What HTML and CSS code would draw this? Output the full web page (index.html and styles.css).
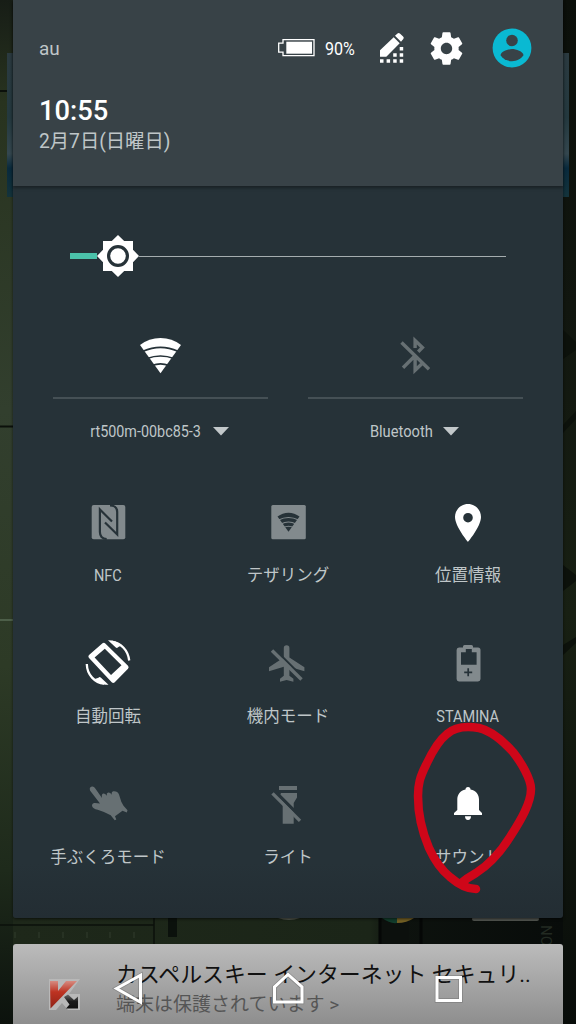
FILE: index.html
```html
<!DOCTYPE html>
<html lang="ja">
<head>
<meta charset="utf-8">
<title>クイック設定</title>
<link rel="stylesheet" href="styles.css">
</head>
<body>
<div class="screen">
  <svg class="wallpaper" width="576" height="1024" viewBox="0 0 576 1024">
    <defs>
      <linearGradient id="wl" x1="0" y1="0" x2="0" y2="1"><stop offset="0" stop-color="#171d16"/><stop offset=".1" stop-color="#28331f"/><stop offset=".4" stop-color="#323f2e"/><stop offset=".65" stop-color="#2d3a26"/><stop offset=".85" stop-color="#1e2a1b"/><stop offset="1" stop-color="#0c120d"/></linearGradient>
      <linearGradient id="wr" x1="0" y1="0" x2="0" y2="1"><stop offset="0" stop-color="#0b0f0a"/><stop offset=".3" stop-color="#11160f"/><stop offset=".6" stop-color="#182013"/><stop offset="1" stop-color="#080c09"/></linearGradient>
      <linearGradient id="card" x1="0" y1="0" x2="0" y2="1"><stop offset="0" stop-color="#2b3a40"/><stop offset=".45" stop-color="#24393f"/><stop offset=".7" stop-color="#34474f"/><stop offset=".8" stop-color="#092a3d"/><stop offset="1" stop-color="#14333b"/></linearGradient>
      <linearGradient id="strip" x1="0" y1="0" x2="1" y2="0"><stop offset="0" stop-color="#1e281a"/><stop offset=".65" stop-color="#1b2518"/><stop offset=".7" stop-color="#0d120e"/><stop offset="1" stop-color="#080c0a"/></linearGradient>
    </defs>
    <rect width="288" height="1024" fill="url(#wl)"/>
    <rect x="288" width="288" height="1024" fill="url(#wr)"/>
    <rect x="7" y="53" width="562" height="144" fill="url(#card)"/>
    <path d="M0 91h7M0 426.500h13" stroke="#0b100b" stroke-width="2"/>
    <path d="M0 620h13" stroke="#4d5f49" stroke-width="2"/>
    <path d="M563 330l13 12v8l-13 9zM563 425l13-14v8l-13 14zM563 565l13 10v6l-13 10zM563 645l13-8v6l-13 12z" fill="#0c110b"/>
    <rect x="13" y="915" width="550" height="32" fill="url(#strip)"/>
    <path d="M0 925h154M154 918v28" stroke="#0b100b" stroke-width="1.500"/>
    <path d="M15 932v6M39 932v6M63 932v6M87 932v6M110 932v6M134 932v6" stroke="#2b3627" stroke-width="1.500"/>
    <rect x="168" y="918" width="9" height="19" fill="#0b110c"/>
    <path d="M278 918q11 4 22 0z" fill="#53584e"/>
    <path d="M380 918h29v26h-29z" fill="#0c100d"/>
    <path d="M380 918v26M421 918v26" stroke="#050706" stroke-width="3"/>
    <path d="M382 918q8 6 15 5v-5z" fill="#123d2c"/>
    <path d="M397 918v5q10 0 17-5z" fill="#746024"/>
    <rect x="472" y="917" width="67" height="4" rx="2" fill="#51544f"/>
    <text class="side-text" transform="translate(541 925) rotate(90)">NO</text>
  </svg>

  <main class="panel">
    <header class="header">
      <div class="status">
        <span class="carrier">au</span>
        <div class="status-icons">
          <svg class="battery" viewBox="0 0 38 18"><path d="M6 .7h31v16H6v-3.500H1.700v-9H6z" fill="none" stroke="#fff" stroke-width="1.300"/><rect x="9.300" y="2.700" width="25.700" height="12" fill="#fff"/></svg>
          <span class="percent"><span class="squeeze">90%</span></span>
          <svg class="edit" viewBox="0 0 48 48" fill="#fff"><path d="M12 26.300v6.400h6.300L31.700 19.200l-6-6zM27 11.700l2.500-2.300q1.200-.8 2.400.2l3.200 3q1.300 1.200.2 2.500L33 17.700zM12 35.200h3.500v3.500H12zM18.600 35.200h3.500v3.500h-3.500zM25.200 35.200h3.500v3.500h-3.500zM31.700 35.200h3.500v3.500h-3.500zM25.200 29.200h3.500v3.500h-3.500zM31.700 29.200h3.500v3.500h-3.500zM31.700 23h3.500v3.500h-3.500z"/></svg>
          <svg class="gear" viewBox="0 0 24 24" fill="#fff"><path d="M19.430 12.980c.04-.32.07-.64.07-.98s-.03-.66-.07-.98l2.110-1.650c.19-.15.24-.42.12-.64l-2-3.460c-.12-.22-.39-.3-.61-.22l-2.490 1c-.52-.4-1.080-.73-1.690-.98l-.38-2.650C14.460 2.180 14.250 2 14 2h-4c-.25 0-.46.18-.49.42l-.38 2.650c-.61.25-1.170.59-1.690.98l-2.490-1c-.23-.09-.49 0-.61.22l-2 3.460c-.13.22-.07.49.12.64l2.110 1.650c-.04.32-.07.65-.07.98s.03.66.07.98l-2.110 1.650c-.19.15-.24.42-.12.64l2 3.460c.12.22.39.3.61.22l2.490-1c.52.4 1.080.73 1.690.98l.38 2.650c.03.24.24.42.49.42h4c.25 0 .46-.18.49-.42l.38-2.650c.61-.25 1.170-.59 1.690-.98l2.490 1c.23.09.49 0 .61-.22l2-3.460c.12-.22.07-.49-.12-.64l-2.110-1.650zM12 15.500c-1.930 0-3.500-1.570-3.500-3.500s1.570-3.500 3.500-3.500 3.500 1.570 3.500 3.500-1.570 3.500-3.500 3.500z"/></svg>
          <svg class="avatar" viewBox="0 0 48 48"><circle cx="24" cy="24" r="19.400" fill="#0ab9d2"/><circle cx="24" cy="16.500" r="5.800" fill="#384247"/><path d="M12.500 31.300c.3-3.800 7.500-6.200 11.500-6.200s11.200 2.400 11.500 6.200C33 35 28.800 37.200 24 37.200S15 35 12.500 31.300z" fill="#384247"/></svg>
        </div>
      </div>
      <div class="clock">10:55</div>
      <div class="date">2月7日(日曜日)</div>
    </header>

    <div class="brightness">
      <span class="level"></span>
      <svg class="knob" viewBox="0 0 42 42"><path d="M21 0l6.200 6H36v8.800L42 21l-6 6.200V36h-8.800L21 42l-6.200-6H6v-8.800L0 21l6-6.200V6h8.800z" fill="#fff"/><circle cx="21" cy="21" r="9.400" fill="none" stroke="#263238" stroke-width="3.200"/></svg>
      <span class="track"></span>
    </div>

    <section class="wide-tiles">
      <div class="wide-tile">
        <div class="wide-icon"><svg class="icon" viewBox="0 0 48 48"><path d="M24.500 42.200L4 14Q13 7 24.500 7T45 14z" fill="#fff"/><g fill="none" stroke="#263238" stroke-width="1.700"><path d="M7 20.300q17.500-7.800 35 0M11 27.500q13.500-5 27 0M16 34.500q8.500-3.400 17 0"/></g></svg></div>
        <div class="wide-label"><span class="ssid">rt500m-00bc85-3</span><svg class="caret" viewBox="0 0 16 9"><path d="M0 0h16L8 8.500z"/></svg></div>
      </div>
      <div class="wide-tile">
        <div class="wide-icon"><svg class="icon off" viewBox="0 0 48 48" fill="none" stroke="currentColor" stroke-width="3.400"><path d="M10.500 11.500L38 38.300M12 36.700l12-12M24.100 24v15.200l6.800-6.500M24.100 17V9.500l7.300 7-4.200 4.200"/></svg></div>
        <div class="wide-label"><span class="bt">Bluetooth</span><svg class="caret" viewBox="0 0 16 9"><path d="M0 0h16L8 8.500z"/></svg></div>
      </div>
    </section>

    <section class="tiles">
      <div class="tile"><div class="tile-icon"><svg class="icon mid" viewBox="0 0 48 48"><rect x="7.700" y="7" width="33.600" height="34.300" rx="2" fill="currentColor"/><path d="M22.700 41c-4.700 0-6.800-3-6.800-7V11.500L28 23.500M26 7.500c5 0 7.200 2.500 7.200 6.500v22.500L21 24.500" fill="none" stroke="#263238" stroke-width="2.200"/></svg></div><div class="label"><span class="nfc">NFC</span></div></div>
      <div class="tile"><div class="tile-icon"><svg class="icon mid" viewBox="0 0 48 48"><rect x="7.300" y="7" width="34.500" height="34.300" rx="1.500" fill="currentColor"/><path d="M24.500 33.800l-11-15.300q5-3.800 11-3.800t11 3.800z" fill="#263238"/><path d="M14.500 22q10-5 20 0M17 26q7.500-4 15 0M19 29.800q5.500-3 11 0" fill="none" stroke="currentColor" stroke-width="1.100"/></svg></div><div class="label">テザリング</div></div>
      <div class="tile"><div class="tile-icon"><svg class="icon" viewBox="0 0 48 48"><path d="M24 6c-7.300 0-13 5.900-13 13 0 9.500 13 25 13 25s13-15.500 13-25c0-7.100-5.700-13-13-13zm0 8.900a4.800 4.800 0 1 1 0 9.600 4.800 4.800 0 0 1 0-9.600z" fill="#fff"/></svg></div><div class="label">位置情報</div></div>

      <div class="tile"><div class="tile-icon"><svg class="icon" viewBox="0 0 48 48"><path fill="#fff" fill-rule="evenodd" d="M5 16L18.500 4.300q1.500-1 2.800.2L44 26.800q1.300 1.500 0 3L30.500 43.500q-1.500 1-2.800-.3L4.800 18.800q-1-1.500.2-2.800zM10.600 18.500L27 36l10.500-9.800L20.800 9.800z"/><path d="M2.800 25C3 36 11 43.800 20 44.600M45.200 21.500C44 11 37 4 28 3" fill="none" stroke="#fff" stroke-width="2.300"/><path d="M24 1.300c6 0 10 1.700 13.500 5L34 8.300q-1 1.200-2.500 0zM24.500 45.700c-7 0-11-2-14.500-5.500l4.500-1.500q1-1.500 2.500 0z" fill="#fff"/></svg></div><div class="label">自動回転</div></div>
      <div class="tile"><div class="tile-icon"><svg class="icon off" viewBox="0 0 48 48"><path d="M19.800 9q0-2.800 2.800-2.800T25.400 9v9.500l15 9.700v4l-15-4.400v9l4 3v2.900l-6.800-1.800L16 42.700v-2.900l3.800-3v-9L5 32.200v-4l14.800-9.700z" fill="currentColor"/><path d="M10.500 10L40 39.500" stroke="#263238" stroke-width="2.300"/><path d="M8 11.500l29.500 29" stroke="currentColor" stroke-width="3.400"/></svg></div><div class="label">機内モード</div></div>
      <div class="tile"><div class="tile-icon"><svg class="icon mid" viewBox="0 0 48 48"><path fill="currentColor" fill-rule="evenodd" d="M20.500 6h7q1.500 0 1.500 1.500v1h5q2.500 0 2.500 2.500v29q0 2.400-2.500 2.400H15q-2.400 0-2.400-2.400V11q0-2.500 2.400-2.500h4v-1Q19 6 20.500 6zM17 13.300v12.400h15.600V13.300h-4.800V10h-6v3.300z"/><path d="M24.200 29.300v8M20.200 33.300h8" stroke="#263238" stroke-width="1.700"/></svg></div><div class="label"><span class="stamina">STAMINA</span></div></div>

      <div class="tile"><div class="tile-icon low"><svg class="icon off" viewBox="0 0 48 48"><path fill="currentColor" d="M6 11.500Q5 8 8 7.600q2-.3 3.300 2L18 19q-.8-4 1.200-4.600 2-.2 3.600 2.400-.6-2.900 1.300-3.400 2.200-.2 3.600 2.300-.5-3 1.500-3.500 4.200-.5 5.800 3.200l2.300 7.300 2.200 4 4 4.500-.7 2.300-4.300-1.800-7.500 5.500 1.300 3.200-1.600.8-4-4.900q-6-3.500-13-5.600-5-1-5.700-4 .2-3 3-2.700l5 .6z"/></svg></div><div class="label">手ぶくろモード</div></div>
      <div class="tile"><div class="tile-icon low"><svg class="icon off" viewBox="0 0 48 48"><path d="M15 7h18v4H15zM17 14h16v4.500l-3.300 5.500v20.700h-11V24L15 18.500z" fill="currentColor"/><path d="M11 12.500l29 29" stroke="#263238" stroke-width="3.200"/><path d="M8.500 14.300L36 41.800" stroke="currentColor" stroke-width="3.300"/></svg></div><div class="label">ライト</div></div>
      <div class="tile"><div class="tile-icon low"><svg class="icon" viewBox="0 0 48 48"><path d="M21.500 10.500q0-2.500 2.500-2.500t2.500 2.500C32 11.500 35 15.500 35 20.500V31l3 3v2H10v-2l3.300-3V20.500c0-5 3-9 8.200-10zM21 37.300h6q0 3.700-3 3.700t-3-3.700z" fill="#fff"/></svg></div><div class="label">サウンド</div></div>
    </section>
  </main>

  <article class="notification">
    <svg class="app-icon" viewBox="0 0 31 31"><defs><linearGradient id="red" x1="0" y1="0" x2="0" y2="1"><stop offset="0" stop-color="#d68b80"/><stop offset=".4" stop-color="#bd3322"/><stop offset="1" stop-color="#8f2216"/></linearGradient><linearGradient id="blk" x1="0" y1="0" x2="0" y2="1"><stop offset="0" stop-color="#6a6a6a"/><stop offset=".5" stop-color="#1a1a1a"/><stop offset="1" stop-color="#111"/></linearGradient></defs><path d="M0 0h31L20 15h11v16H19l-6-7-6 7H0z" fill="#b8b8b8"/><path d="M1 2h8v10l8-10h11L1.500 29.500z" fill="url(#red)"/><path d="M15 18l4-2.500 6 5.500 4-3.500V29.500H17l3.500-4z" fill="url(#blk)"/></svg>
    <div class="message">
      <div class="title"><span>カスペルスキー インターネット セキュリ..</span></div>
      <div class="detail"><span>端末は保護されています &gt;</span></div>
    </div>
  </article>

  <svg class="overlay" width="576" height="1024" viewBox="0 0 576 1024" fill="none">
    <path d="M116.500 988.500l24-13.300v27zM274.500 1002V987L288 974.500l14 12.500v15zM437 977.500h23.500v23H437z" stroke="#444" stroke-opacity=".3" stroke-width="4.500"/>
    <path d="M116.500 988.500l24-13.300v27zM274.500 1002V987L288 974.500l14 12.500v15zM437 977.500h23.500v23H437z" stroke="#fff" stroke-width="3"/>
    <path d="M476 889C466 889 458 884 450 877 440 869 434 859 429 848 423 834 418 815 418 796 418 784 420 777 426 765 432 752 438 741 447 734 455 727 467 726 479 728 492 731 504 742 513 752 521 762 531 779 531 789 531 803 521 820 510 837 500 853 490 864 476 873Q467 878 460 884" stroke="#cf0619" stroke-width="8.500" stroke-linecap="round" stroke-linejoin="round"/>
  </svg>
</div>
</body>
</html>
```
FILE: styles.css
```css
* { box-sizing: border-box; }
body {
  margin: 0;
  background: #0b100c;
  font-family: Roboto, "Noto Sans CJK JP", sans-serif;
  color: #bfc6c8;
}
svg { display: block; flex: none; }
.screen {
  position: relative;
  width: 576px;
  height: 1024px;
  padding: 0 13px;
  overflow: hidden;
  display: flex;
  flex-direction: column;
  gap: 26px;
}
.wallpaper, .overlay { position: absolute; left: 0; top: 0; }
.wallpaper { z-index: -1; }
.side-text { font-size: 15px; fill: #222a22; }
.panel {
  height: 918px;
  flex: none;
  background: linear-gradient(#263238 94%, #232d33);
  border-radius: 0 0 3px 3px;
  box-shadow: 0 1px 3px rgba(0, 0, 0, .6);
}
.header {
  height: 186px;
  padding: 0 27px 0 26px;
  background: #384247;
  box-shadow: 0 2px 3px rgba(0, 0, 0, .35);
}
.status { height: 96px; display: flex; align-items: center; justify-content: space-between; }
.carrier { font-size: 19px; line-height: 24px; padding-top: 2px; }
.status-icons { display: flex; align-items: center; color: #fff; }
.battery { width: 38px; height: 18px; }
.percent { width: 53px; padding-left: 10px; font-size: 17.500px; line-height: 24px; padding-top: 1px; }
.squeeze { display: inline-block; transform: scaleX(.92); transform-origin: 0 50%; }
.edit { width: 48px; height: 48px; }
.gear { width: 39px; height: 39px; margin: 0 22px 0 11px; }
.avatar { width: 48px; height: 48px; }
.clock { color: #fff; font-weight: 500; font-size: 27.300px; line-height: 30px; }
.date { font-size: 19.300px; line-height: 28px; margin-top: 2px; }

.brightness { height: 140px; padding: 0 57px; display: flex; align-items: center; }
.level { width: 27px; height: 6px; background: #4bc2aa; }
.knob { width: 42px; height: 42px; }
.track { flex: 1; height: 1px; background: #a5adaf; }

.wide-tiles { height: 157px; padding: 0 40px; display: grid; grid-template-columns: 215px 215px; gap: 40px; }
.wide-icon { height: 73px; padding: 5px 1px 0 0; display: flex; justify-content: center; border-bottom: 2px solid #455055; }
.icon { width: 48px; height: 48px; }
.off { color: #677073; }
.mid { color: #828a8d; }
.wide-label { height: 64px; padding-right: 2px; display: flex; align-items: center; justify-content: center; gap: 11px; font-size: 16.500px; }
.caret { width: 16px; height: 9px; fill: #c2c8ca; }
.ssid, .bt, .nfc, .stamina { display: inline-block; white-space: nowrap; }
.ssid { transform: scaleX(.87); margin: 0 -8px; }
.bt { transform: scaleX(.89); margin: 0 -4px; }
.nfc { transform: scaleX(.88); }
.stamina { transform: scaleX(.88); }

.tiles { padding: 0 5px; display: grid; grid-template-columns: repeat(3, 180px); grid-auto-rows: 141px; }
.tile { display: flex; flex-direction: column; align-items: center; }
.tile-icon { height: 80px; padding-top: 15px; }
.tile-icon.low { padding-top: 14px; }
.label { height: 26px; font-size: 16.500px; line-height: 26px; white-space: nowrap; }

.notification {
  flex: 1;
  display: flex;
  padding: 16px 32px 0 36px;
  background: linear-gradient(#bbb, #8e8e8e);
  border-radius: 3px 3px 0 0;
}
.app-icon { width: 31px; height: 31px; margin: 19px 36px 0 0; }
.message { white-space: nowrap; }
.title { color: #111; font-size: 22px; line-height: 30px; }
.detail { color: #555; font-size: 19px; line-height: 28px; padding-top: 1px; }
.title span, .detail span { display: inline-block; transform-origin: 0 50%; }
.title span { transform: scaleX(.995); }
```
